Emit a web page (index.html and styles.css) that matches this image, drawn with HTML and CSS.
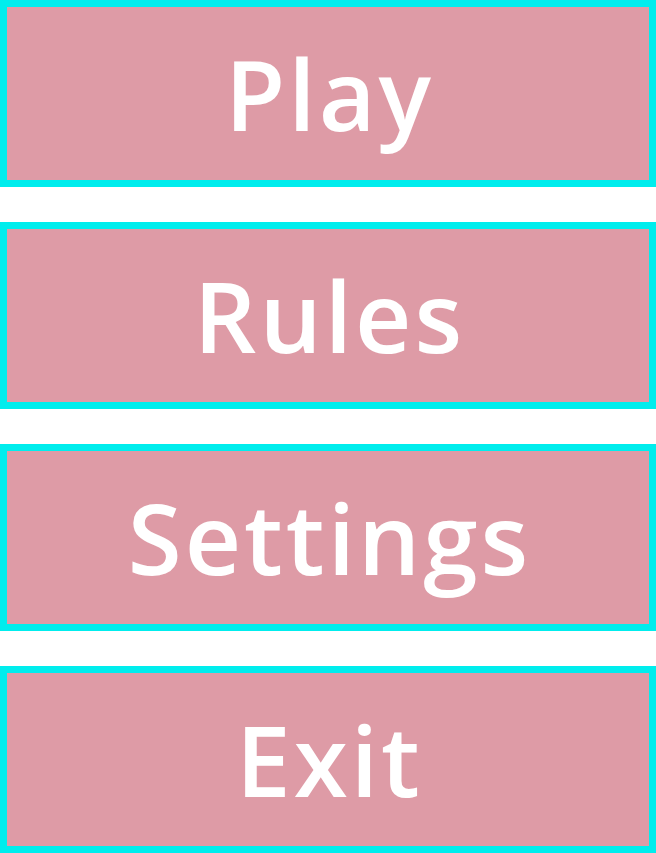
FILE: index.html
```html
<!DOCTYPE html>
<html>
<head>
<meta charset="utf-8">
<link rel="stylesheet" href="styles.css">
</head>
<body>
<div class="menu">
  <button class="menu-btn">Play</button>
  <button class="menu-btn">Rules</button>
  <button class="menu-btn">Settings</button>
  <button class="menu-btn">Exit</button>
</div>
</body>
</html>
```
FILE: styles.css
```css
html, body {
  margin: 0;
  padding: 0;
  background: #ffffff;
}
.menu {
  display: flex;
  flex-direction: column;
  gap: 35px;
  width: 656px;
}
.menu-btn {
  box-sizing: border-box;
  height: 187px;
  width: 100%;
  margin: 0;
  padding: 0 0 2px 3px;
  border: 7px solid #00eded;
  background: #de9ba6;
  color: #ffffff;
  font-family: "Open Sans", sans-serif;
  font-size: 98px;
  font-weight: 600;
  letter-spacing: 3px;
  line-height: 1;
  display: flex;
  align-items: center;
  justify-content: center;
}
```
